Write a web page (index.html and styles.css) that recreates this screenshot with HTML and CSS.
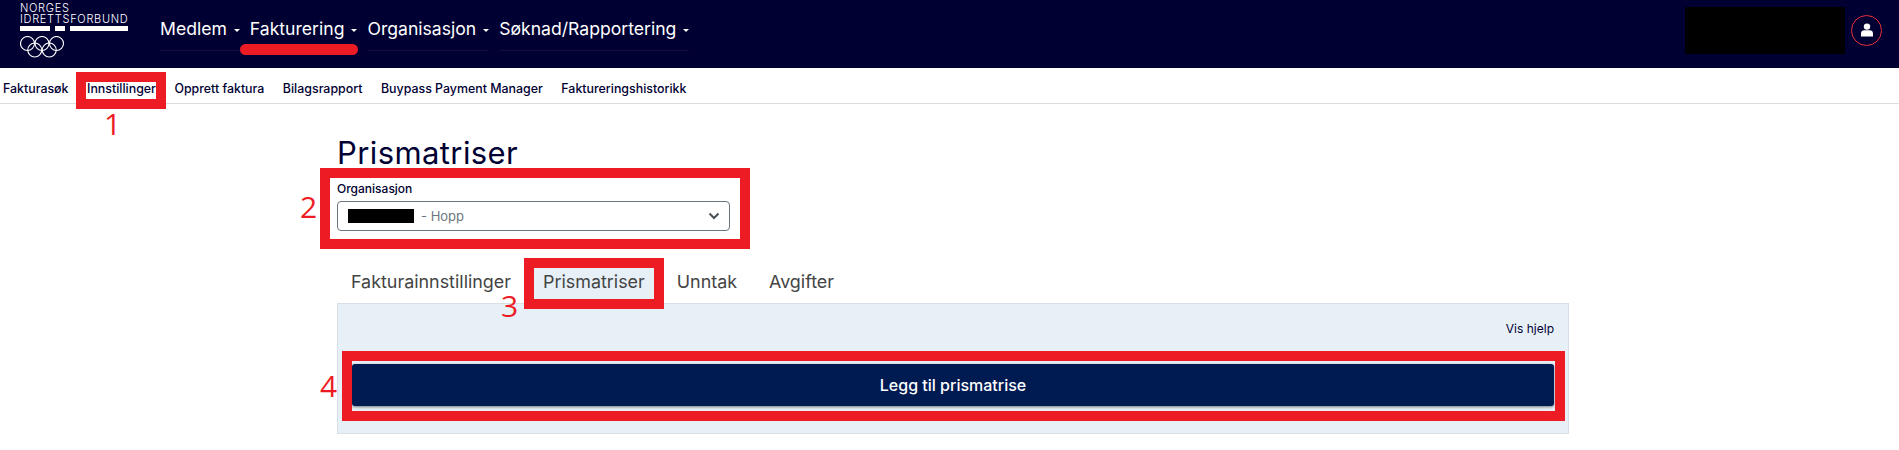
FILE: index.html
```html
<!DOCTYPE html>
<html lang="no">
<head>
  <meta charset="UTF-8" />
  <title>Prismatriser</title>
  <meta name="viewport" content="width=device-width, initial-scale=1" />
  <link rel="stylesheet" href="styles.css">
</head>
<body>
  <header class="topbar">
    <div class="logo">
      <div class="logo-text">NORGES<br>IDRETTSFORBUND</div>
      <div class="logo-bars"><span class="bar-a"></span><span class="bar-b"></span><span class="bar-c"></span></div>
      <svg class="logo-rings" width="46" height="23" viewBox="0 0 46 23" fill="none" stroke="#fff" stroke-width="1.1">
        <circle cx="7.500" cy="7.500" r="7"/>
        <circle cx="22" cy="7.500" r="7"/>
        <circle cx="36.500" cy="7.500" r="7"/>
        <circle cx="14.750" cy="14" r="7"/>
        <circle cx="29.250" cy="14" r="7"/>
      </svg>
    </div>
    <nav class="main-nav">
      <a href="#" class="main-link">Medlem</a>
      <a href="#" class="main-link">Fakturering</a>
      <a href="#" class="main-link">Organisasjon</a>
      <a href="#" class="main-link">Søknad/Rapportering</a>
    </nav>
    <div class="user-area">
      <div class="user-hidden"></div>
      <div class="avatar">
        <svg width="14" height="14" viewBox="0 0 14 14" fill="#fff">
          <circle cx="7" cy="3.600" r="3.200"/>
          <path d="M1 13.500 V10.500 C1 8.500 2.500 7.300 4.300 7.300 H9.700 C11.500 7.300 13 8.500 13 10.500 V13.500 Z"/>
        </svg>
      </div>
    </div>
  </header>

  <nav class="sub-nav">
    <a href="#">Fakturasøk</a>
    <a href="#">Innstillinger</a>
    <a href="#">Opprett faktura</a>
    <a href="#">Bilagsrapport</a>
    <a href="#">Buypass Payment Manager</a>
    <a href="#">Faktureringshistorikk</a>
  </nav>

  <main class="content">
    <h1>Prismatriser</h1>
    <label class="field-label">Organisasjon</label>
    <div class="select-box">
      <span class="select-hidden"></span>
      <span class="select-value">- Hopp</span>
      <svg class="chevron" width="12" height="8" viewBox="0 0 12 8" fill="none" stroke="#4a5056" stroke-width="2"><path d="M1.500 1.500 L6 6 L10.500 1.500"/></svg>
    </div>
    <div class="tabs">
      <a href="#" class="tab">Fakturainnstillinger</a>
      <a href="#" class="tab active">Prismatriser</a>
      <a href="#" class="tab">Unntak</a>
      <a href="#" class="tab">Avgifter</a>
    </div>
    <section class="panel">
      <div class="help-row"><a href="#">Vis hjelp</a></div>
      <button class="add-button">Legg til prismatrise</button>
    </section>
  </main>

  <!-- annotations drawn on top of the screenshot -->
  <div class="underline"></div>
  <div class="mark mark-1"></div>
  <div class="mark mark-2"></div>
  <div class="mark mark-3"></div>
  <div class="mark mark-4"></div>
  <span class="num num-1">1</span>
  <span class="num num-2">2</span>
  <span class="num num-3">3</span>
  <span class="num num-4">4</span>
</body>
</html>
```

FILE: styles.css
```css
* {
  box-sizing: border-box;
}
html, body {
  margin: 0;
  height: 450px;
  overflow: hidden;
}
body {
  position: relative;
  font-family: Inter, "Liberation Sans", sans-serif;
  background-color: #fff;
  color: #000033;
}
a {
  text-decoration: none;
  color: inherit;
}

/* top bar */
.topbar {
  display: flex;
  align-items: flex-start;
  height: 68px;
  padding-left: 20px;
  background-color: #000033;
  color: #fff;
}
.logo {
  width: 140px;
  padding-top: 3px;
}
.logo-text {
  font-size: 11px;
  font-weight: 300;
  line-height: 11px;
  letter-spacing: 0.7px;
}
.logo-bars {
  display: flex;
  gap: 5px;
  margin-top: 1px;
  height: 5px;
}
.logo-bars span {
  background-color: #fff;
}
.bar-a {
  width: 30px;
}
.bar-b {
  width: 10px;
}
.bar-c {
  width: 58px;
}
.logo-rings {
  display: block;
  margin-top: 5px;
}
.main-nav {
  display: flex;
  gap: 10px;
  margin-top: 18px;
}
.main-link {
  display: flex;
  align-items: center;
  gap: 7px;
  padding-bottom: 10px;
  border-bottom: 1px solid #1a0a3a;
  font-size: 17.600px;
  font-weight: 400;
  line-height: 22px;
}
.main-link::after {
  content: "";
  width: 0;
  height: 0;
  margin-top: 2px;
  border-top: 3px solid #fff;
  border-left: 3px solid transparent;
  border-right: 3px solid transparent;
}
.user-area {
  display: flex;
  align-items: center;
  gap: 6px;
  margin-left: auto;
  padding-right: 17px;
  height: 60px;
}
.user-hidden {
  width: 160px;
  height: 47px;
  background-color: #000;
}
.avatar {
  display: flex;
  align-items: center;
  justify-content: center;
  width: 31px;
  height: 31px;
  border: 1px solid #e8313a;
  border-radius: 50%;
}

/* second row */
.sub-nav {
  display: flex;
  gap: 18.500px;
  height: 36px;
  padding: 6px 0 0 3px;
  align-items: center;
  border-bottom: 1px solid #dcdcdc;
  font-size: 12.400px;
  font-weight: 500;
}

/* page content */
.content {
  width: 1232px;
  margin-left: 337px;
}
h1 {
  margin: 30px 0 0;
  font-size: 31px;
  font-weight: 400;
  line-height: 38px;
  letter-spacing: 0.4px;
}
.field-label {
  display: block;
  margin-top: 9px;
  font-size: 12px;
  font-weight: 500;
  line-height: 16px;
}
.select-box {
  display: flex;
  align-items: center;
  width: 393px;
  height: 30px;
  margin-top: 4px;
  padding: 0 9px 0 10px;
  border: 1px solid #6c757d;
  border-radius: 4px;
  font-size: 13px;
  color: #6c757d;
}
.select-hidden {
  width: 66px;
  height: 14px;
  margin-right: 7px;
  background-color: #000;
}
.chevron {
  margin-left: auto;
}
.tabs {
  display: flex;
  margin-top: 36px;
  height: 36px;
}
.tab {
  padding: 4px 16px 0;
  font-size: 17.900px;
  line-height: 22px;
  color: #444;
}
.tab:first-child {
  margin-left: -2px;
}
.tab.active {
  background-color: #e8f0f7;
}
.panel {
  height: 131px;
  padding: 0 14px 0 14px;
  border: 1px solid #d8dfe7;
  background-color: #e8f0f7;
}
.help-row {
  display: flex;
  justify-content: flex-end;
  padding-top: 17px;
  font-size: 12px;
  line-height: 16px;
}
.add-button {
  display: block;
  width: 100%;
  height: 42px;
  margin-top: 27px;
  border: 0;
  border-radius: 3px;
  background-color: #001a52;
  box-shadow: 0 1px 3px rgba(0, 0, 0, 0.5);
  color: #fff;
  font-family: inherit;
  font-size: 16px;
  font-weight: 500;
}

/* red annotations */
.underline {
  position: absolute;
  left: 240px;
  top: 44px;
  width: 118px;
  height: 11px;
  border-radius: 6px;
  background-color: #ed1c24;
}
.mark {
  position: absolute;
  border: 10px solid #ed1c24;
}
.mark-1 {
  left: 76px;
  top: 72px;
  width: 90px;
  height: 37px;
}
.mark-2 {
  left: 320px;
  top: 168px;
  width: 430px;
  height: 81px;
}
.mark-3 {
  left: 524px;
  top: 258px;
  width: 140px;
  height: 51px;
}
.mark-4 {
  left: 342px;
  top: 351px;
  width: 1223px;
  height: 70px;
}
.num {
  position: absolute;
  font-family: "Open Sans", sans-serif;
  font-size: 30px;
  line-height: 22px;
  color: #ed1c24;
}
.num-1 {
  left: 104px;
  top: 113px;
}
.num-2 {
  left: 300px;
  top: 196px;
}
.num-3 {
  left: 501px;
  top: 295px;
}
.num-4 {
  left: 320px;
  top: 375px;
}
```
